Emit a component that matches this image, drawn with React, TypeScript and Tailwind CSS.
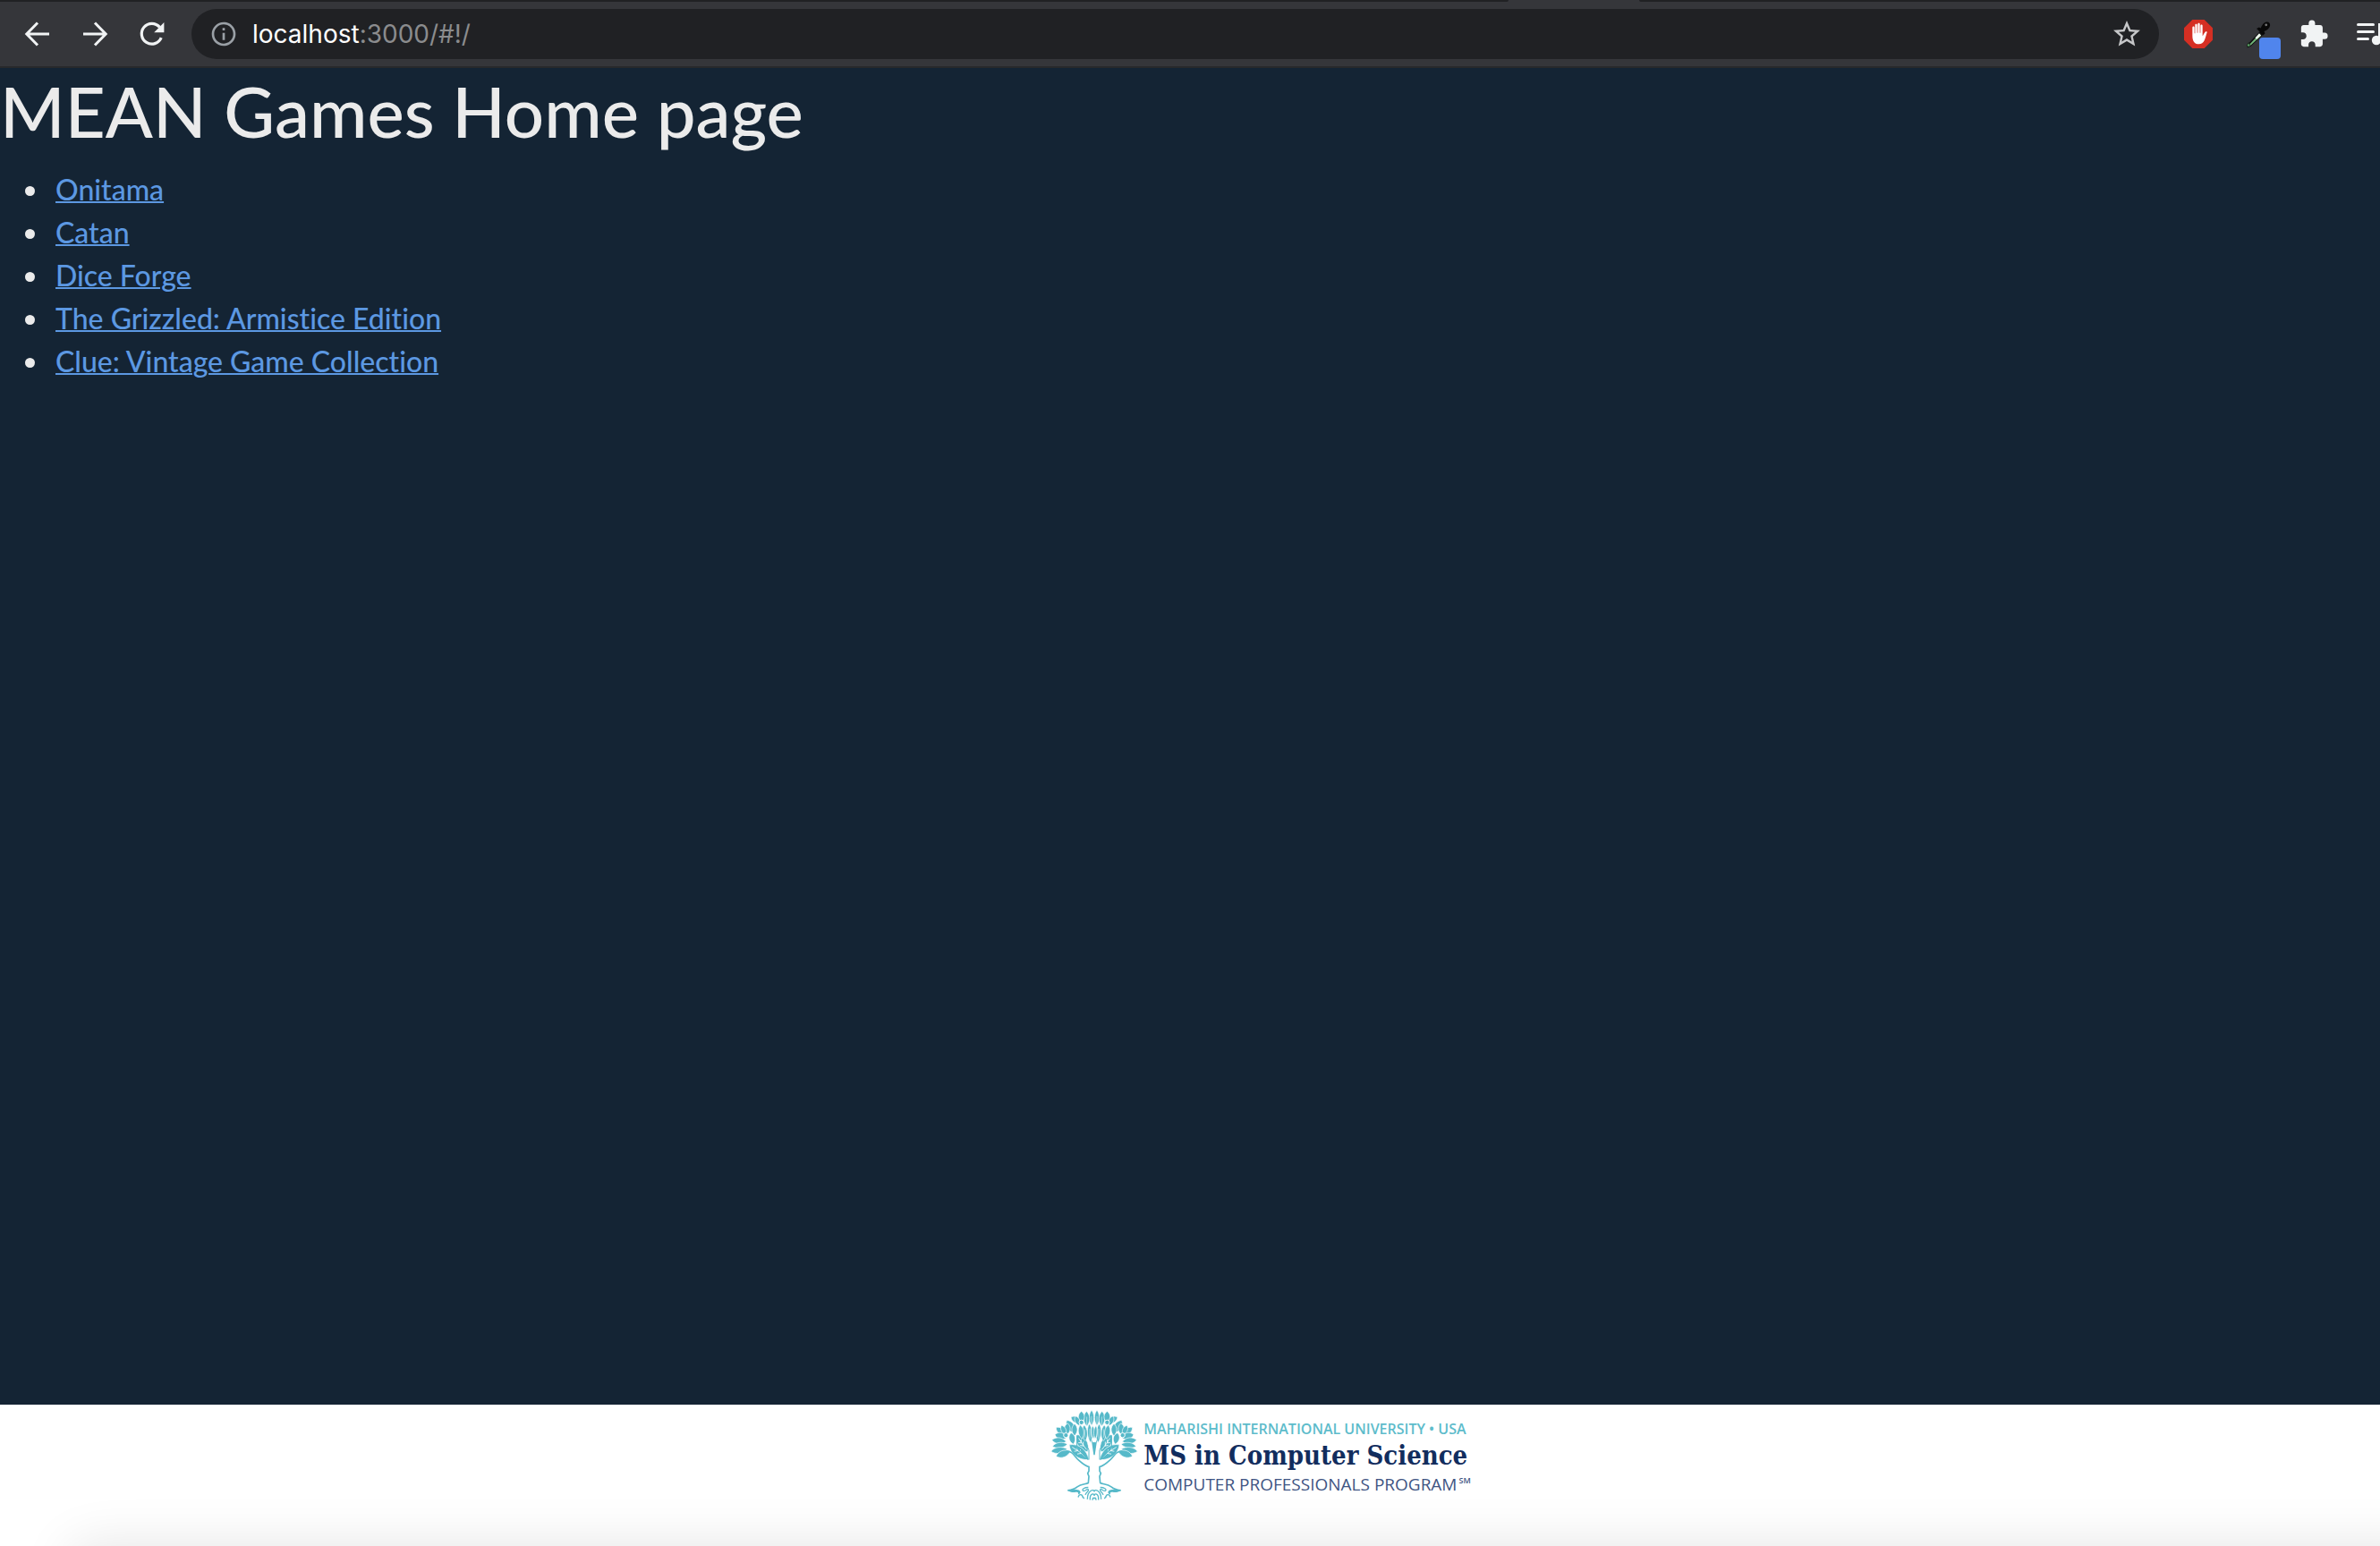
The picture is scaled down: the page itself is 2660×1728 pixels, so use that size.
import { MdExtension, MdInfoOutline, MdStarBorder } from "react-icons/md";

const TEAL = "#56b9c9";

const games = [
  "Onitama",
  "Catan",
  "Dice Forge",
  "The Grizzled: Armistice Edition",
  "Clue: Vintage Game Collection",
];

function BackIcon() {
  return (
    <svg viewBox="0 0 32 32" className="size-8" fill="none" stroke="#f1f3f4" strokeWidth="3">
      <path d="M29 16H4M16 3.5 3.8 16 16 28.5" />
    </svg>
  );
}

function ForwardIcon() {
  return (
    <svg viewBox="0 0 32 32" className="size-8" fill="none" stroke="#f1f3f4" strokeWidth="3">
      <path d="M3 16h25M16 3.5 28.2 16 16 28.5" />
    </svg>
  );
}

function ReloadIcon() {
  return (
    <svg viewBox="0 0 32 32" className="size-8" fill="none">
      <path d="M26.2 20.2A11.4 11.4 0 1 1 24.4 8.4" stroke="#f1f3f4" strokeWidth="3.2" />
      <path d="M29.4 3v11.2H18.2z" fill="#f1f3f4" />
    </svg>
  );
}

function BlockerIcon() {
  return (
    <svg viewBox="0 0 96 96" className="size-8">
      <path d="M28 0h40l28 28v40L68 96H28L0 68V28z" fill="#d52f23" />
      <path
        d="M28 53V26c0-5 7-5 7 0v20h2V18c0-5 7-5 7 0v26h2V15c0-5 7-5 7 0v29h2V20c0-5 7-5 7 0v35c3-5 6-11 9-14 2-2 7-1 6 2-3 8-5 18-9 27-4 8-10 12-18 12-13 0-22-8-22-29z"
        fill="#fff"
      />
    </svg>
  );
}

function EyedropperIcon() {
  return (
    <svg viewBox="0 -7.5 44 48.4" className="h-11 w-10">
      <path d="M23 13.5 8.5 28.5l-1.3 5.2 4.6-1.8L27 17.5z" fill="#101010" />
      <path d="M22 17 10.5 29l-1.2 2.6 2.4-1.2L24.5 18.5z" fill="#72b878" />
      <path d="m22 16-5 5.5 2 1.8 5.3-5z" fill="#edf5ed" />
      <path
        d="m18.8 10.2 3-1.8 2 1.2c1.6-4.2 4-7.4 7-7.8 3.2-.3 5 1.6 4.5 4.700-.6 3.300-3.500 5.600-7.300 7l1.200 2.300-2.300 2.600z"
        fill="#080808"
      />
      <circle cx="30.5" cy="5.5" r="1.5" fill="#777" />
      <path d="M9.500 26.500c-2 1.600-3.300 3.300-3 5 .4 1.600 4 1.600 4.500-.2.300-1.300-.4-2.800-1.500-4.800z" fill="#1d2a20" />
      <circle cx="9" cy="30.5" r="1.4" fill="#5ca766" />
    </svg>
  );
}

function PlaylistIcon() {
  return (
    <svg viewBox="0 0 40 32" className="h-8 w-10 shrink-0" fill="#f1f3f4">
      <rect x="0" y="4" width="20" height="3" rx="1.5" />
      <rect x="0" y="12" width="20" height="3" rx="1.5" />
      <rect x="0" y="20" width="14" height="3" rx="1.5" />
      <circle cx="22" cy="23" r="5.2" />
      <path d="M24 4h10v4h-6.500v15H24z" />
    </svg>
  );
}

// Each leaf runs from its tip to its base; the last number is its half width.
const leaves: number[][] = [
  [181, 46, 181, 98, 8],
  [164, 50, 165, 100, 10],
  [112, 69, 146, 88, 10],
  [147, 50, 147, 88, 10],
  [127, 66, 140, 98, 8],
  [98, 80, 124, 122, 12],
  [124, 92, 124, 132, 9],
  [62, 104, 96, 131, 10],
  [101, 90, 97, 130, 10],
  [80, 97, 94, 128, 8],
  [58, 128, 98, 138, 11],
  [48, 146, 96, 151, 10],
  [50, 167, 100, 160, 9],
  [45, 184, 100, 177, 10],
  [62, 201, 110, 184, 11],
  [112, 122, 120, 160, 10],
  [133, 128, 168, 186, 16],
  [106, 162, 172, 212, 17],
  [156, 96, 160, 150, 9],
  [173, 92, 178, 156, 8],
  [143, 96, 149, 142, 9],
  [184, 98, 187, 142, 6],
];

function leafPath([x1, y1, x2, y2, w]: number[]) {
  const dx = x2 - x1;
  const dy = y2 - y1;
  const len = Math.hypot(dx, dy);
  const nx = (-dy / len) * w * 1.35;
  const ny = (dx / len) * w * 1.35;
  const c1x = x1 + dx * 0.25;
  const c1y = y1 + dy * 0.25;
  const c2x = x1 + dx * 0.7;
  const c2y = y1 + dy * 0.7;
  return `M${x1} ${y1}C${c1x + nx} ${c1y + ny} ${c2x + nx} ${c2y + ny} ${x2} ${y2}C${c2x - nx} ${c2y - ny} ${c1x - nx} ${c1y - ny} ${x1} ${y1}Z`;
}

function TreeHalf() {
  return (
    <g>
      {leaves.map((leaf) => (
        <path key={leaf.join()} d={leafPath(leaf)} fill={TEAL} stroke="#fff" strokeWidth="2" />
      ))}
      <path d="M180 142q6 18 10 10v44h-2z" fill={TEAL} />
      <g fill="none" stroke="#fff" strokeWidth="2.5">
        <path d="M138 140q10 18 26 38M146 156v-12M153 166v-14M147 156l-10-1M154 166l-11-2" />
        <path d="M116 170q22 12 46 34M134 182l-2-11M145 190l-2-12M135 182l-12 2M146 191l-13 2" />
        <path d="M181 66v70M165 68v36M158 110v28M175 108v34" strokeWidth="1.5" />
      </g>
      <circle cx="147" cy="87" r="8" fill={TEAL} stroke="#fff" strokeWidth="3" />
      <circle cx="95" cy="130" r="8" fill={TEAL} stroke="#fff" strokeWidth="3" />
      <g fill="none" stroke={TEAL} strokeWidth="5">
        <path d="M96 183c22 0 27 18 42 31 13 12 21 19 34 22v14l-4 8 4 10-2 22c-8 5-23 3-37 13-8 7-19 10-32 12" />
        <path d="M132 130v42l38 40" strokeWidth="3.5" />
        <path d="M160 146c4 16 8 26 12 34v32" strokeWidth="3" />
      </g>
      <path d="M100 314c14-2 28-4 38 0 8 4 8 14-2 14 2-6-2-8-8-7-10 2-20 0-28-7z" fill={TEAL} />
      <g fill="none" stroke={TEAL} strokeWidth="4">
        <path d="M170 305c-14 0-22 6-18 11 8 4 12-8 18-4 4 6-8 8-10 18" />
        <path d="M136 338c3-12 15-12 16 2M148 331l8 12" />
        <path d="M167 345c0-32 23-36 23-26M176 347c-2-22 14-24 14-14M184 348c0-10 6-9 6-5" />
      </g>
    </g>
  );
}

function TreeLogo() {
  return (
    <svg viewBox="43 43 294 308" className="h-[103px] w-[98px] shrink-0" role="img" aria-label="University tree">
      <TreeHalf />
      <g transform="translate(380 0) scale(-1 1)">
        <TreeHalf />
      </g>
    </svg>
  );
}

function BrowserBar() {
  return (
    <header className="overflow-hidden border-b-2 border-[#28292b] bg-[#35363a]">
      <div className="flex h-0.5">
        <div className="w-[63.4%] rounded-br bg-[#202124]" />
        <div className="w-[146px]" />
        <div className="flex-1 rounded-bl bg-[#202124]" />
      </div>
      <div className="flex h-[72px] items-center">
        <nav className="flex gap-8 pr-7 pl-[26px]">
          <button aria-label="Back"><BackIcon /></button>
          <button aria-label="Forward"><ForwardIcon /></button>
          <button aria-label="Reload"><ReloadIcon /></button>
        </nav>
        <div className="flex h-14 flex-1 items-center rounded-full bg-[#202124] pr-[18px] pl-5">
          <button aria-label="Site information">
            <MdInfoOutline className="size-8 text-[#9aa0a6]" />
          </button>
          <a href="#!/" className="flex-1 pl-4 font-['Inter',sans-serif] text-[28px] leading-10 text-[#8b8c8e]">
            <span className="text-white">localhost</span>:3000/#!/
          </a>
          <button aria-label="Bookmark this page">
            <MdStarBorder className="size-9 text-[#c6c7c9]" />
          </button>
        </div>
        <div className="flex items-center pl-7">
          <button aria-label="Content blocker"><BlockerIcon /></button>
          <button aria-label="Color picker" className="relative ml-8">
            <EyedropperIcon />
            <span className="absolute -right-1 -bottom-1.5 size-6 rounded bg-[#5085ed]" />
          </button>
          <button aria-label="Extensions" className="ml-6">
            <MdExtension className="size-[34px] text-[#f1f3f4]" />
          </button>
          <button aria-label="Media controls" className="-mr-3.5 ml-[31px]"><PlaylistIcon /></button>
        </div>
      </div>
    </header>
  );
}

export default function App() {
  return (
    <div className="flex min-h-screen flex-col overflow-hidden bg-[#142434] font-['Lato',sans-serif] text-[#ebebeb]">
      <BrowserBar />
      <main className="flex-1 font-medium [font-variant-ligatures:none]">
        <h1 className="mb-4 text-[78px] leading-[96px]">MEAN Games Home page</h1>
        <ul className="list-disc pl-14 text-[32px] leading-[48px]">
          {games.map((game) => (
            <li key={game} className="pl-1.5">
              <a href="#!/" className="text-[#5c98e2] underline decoration-2">{game}</a>
            </li>
          ))}
        </ul>
      </main>
      <footer className="relative flex h-[158px] justify-center overflow-hidden bg-white pt-[5px] pl-[158px]">
        <div className="flex gap-1.5">
          <TreeLogo />
          <div className="flex flex-col pt-2.5 whitespace-nowrap">
            <span className="font-['Open_Sans',sans-serif] text-[16px] leading-6 font-semibold text-[#5dbccb]">
              MAHARISHI INTERNATIONAL UNIVERSITY • USA
            </span>
            <span className="font-['DejaVu_Serif_Condensed','DejaVu_Serif',serif] text-[29px] leading-9 font-bold text-[#122d5e]">
              MS in Computer Science
            </span>
            <span className="flex font-['Open_Sans',sans-serif] text-[19px] leading-7 text-[#3f5583]">
              COMPUTER PROFESSIONALS PROGRAM
              <span className="pl-0.5 text-[9px] leading-5 font-semibold">SM</span>
            </span>
          </div>
        </div>
        <div className="absolute top-full -right-24 left-20 h-40 rounded-xl shadow-[0_0_60px_rgba(0,0,0,0.11)]" />
      </footer>
    </div>
  );
}
